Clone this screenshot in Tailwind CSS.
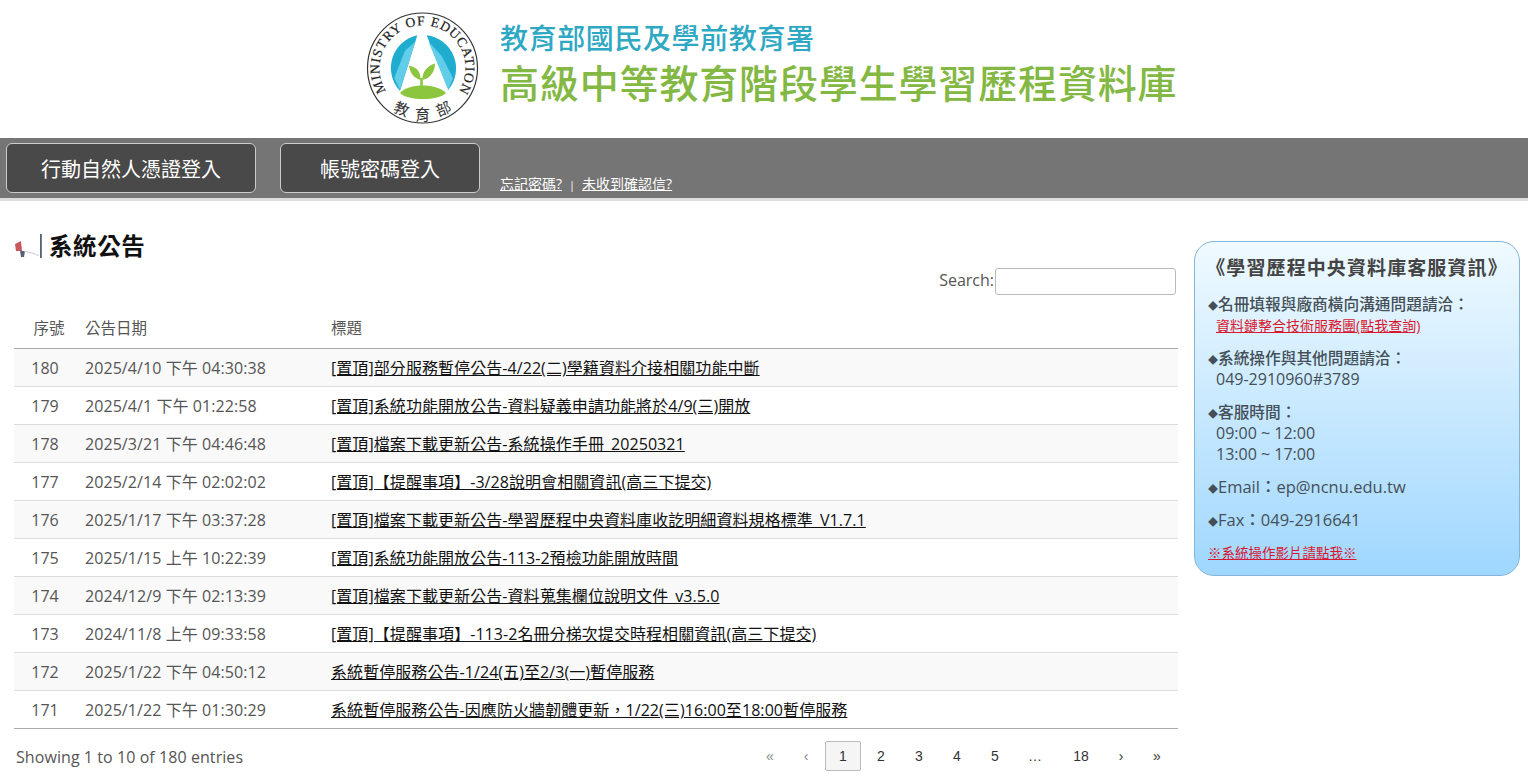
<!DOCTYPE html>
<html lang="zh-Hant">
<head>
    <meta charset="UTF-8">
    <title>高級中等教育階段學生學習歷程資料庫</title>
    <script src="https://cdn.jsdelivr.net/npm/@tailwindcss/browser@4"></script>
</head>
<body class="bg-white text-[#555] h-[778px] overflow-hidden font-['Open_Sans','Noto_Sans_CJK_TC',sans-serif]">
    <!-- Logo -->
    <header class="h-[138px] pl-[366px] pt-[12px] flex items-start gap-[21px]">
        <svg class="w-[113px] h-[113px] shrink-0" viewBox="0 0 113 113">
            <circle cx="56.5" cy="56" r="55" fill="#fff" stroke="#333" stroke-width="1.2"/>
            <path d="M51.3 23.3 A33.5 33.5 0 0 0 34 79 Z" fill="#1fadcf"/>
            <path d="M60.7 23.3 A33.5 33.5 0 0 1 82.3 78 Z" fill="#1fadcf"/>
            <path d="M49.7 29.3 L34 77.7 L28.3 66 L39 38.7 Z" fill="#62cde8"/>
            <path d="M62.3 29.3 L82.3 77.7 L87 66 L75.7 44 Z" fill="#62cde8"/>
            <path d="M34 81 C42 71 71 71 80 81 C72 89 42 89 34 81 Z" fill="#8cc63f"/>
            <path d="M55.5 76 L55.5 66" stroke="#8cc63f" stroke-width="2.6" fill="none"/>
            <path d="M54.5 68 C47 66 44 60 43 53.5 C50 55 55 59 54.5 68 Z M56.5 68 C56 60 61 54 69 51.5 C69 59 65 66 56.5 68 Z" fill="#8cc63f"/>
            <defs><path id="ring" d="M20 79 A43 43 0 1 1 93 79"/></defs>
            <text font-family="Liberation Serif" font-size="13.5" fill="#222" stroke="#222" stroke-width="0.2"><textPath href="#ring" textLength="183">MINISTRY OF EDUCATION</textPath></text>
            <g font-family="Noto Sans CJK TC" font-size="15" fill="#333" text-anchor="middle">
                <text transform="translate(33.5 102) rotate(22)">教</text>
                <text transform="translate(56.5 107.5)">育</text>
                <text transform="translate(79.5 102) rotate(-22)">部</text>
            </g>
        </svg>
        <div class="pt-[7px]">
            <div class="text-[#2fa8c4] text-[28px] leading-[38px] font-medium tracking-[0.6px]">教育部國民及學前教育署</div>
            <div class="text-[#84b844] text-[39px] leading-[52px] font-medium tracking-[0.85px]">高級中等教育階段學生學習歷程資料庫</div>
        </div>
    </header>

    <!-- 登入列 -->
    <nav class="h-[63px] bg-[#757575] border-b-[3px] border-[#ddd] pt-[5px] pl-[6px] flex items-start">
        <a class="w-[250px] h-[50px] pt-[3px] bg-[#494949] border border-[#ccc] rounded-[6px] text-white text-[20px] flex items-center justify-center">行動自然人憑證登入</a>
        <a class="w-[200px] h-[50px] pt-[3px] ml-[24px] bg-[#494949] border border-[#ccc] rounded-[6px] text-white text-[20px] flex items-center justify-center">帳號密碼登入</a>
        <div class="ml-[20px] mt-[31px] text-[14px] leading-[20px] text-white">
            <a class="underline">忘記密碼?</a><span class="mx-[7px] text-[11px]">|</span><a class="underline">未收到確認信?</a>
        </div>
    </nav>

    <main class="flex pl-[14px] pr-[8px] gap-[16px]">
        <section class="w-[1164px]">
            <h2 class="h-[67px] pt-[29px] pb-[6px] flex items-center text-[#111] text-[23.5px] leading-[30px] font-bold tracking-[0.6px]">
                <svg class="w-[28px] h-[26px] mr-[7px] shrink-0" viewBox="0 0 28 26">
                    <path d="M1 11 L7 8 L8 18 L2 18 Z" fill="#c9585c"/>
                    <path d="M6 18 L11 18 L10 24 L7 24 Z" fill="#56607a"/>
                    <path d="M10 18 C15 20 21 20 25 23" stroke="#ccc" stroke-width="1" fill="none"/>
                    <rect x="26" y="1" width="1.8" height="24" fill="#56607a"/>
                </svg>
                系統公告
            </h2>
            <div class="h-[43px] flex justify-end items-start text-[16px] pr-[2px]">
                <label class="leading-[25px] mr-[1px]">Search:</label>
                <input class="w-[181px] h-[27px] bg-white border border-[#bbb] rounded-[3px]">
            </div>
            <table class="w-full text-[16px] border-collapse table-fixed">
                <thead>
                    <tr class="h-[37px] border-b border-[#aaa]">
                        <th class="w-[61px] pb-[1px] font-normal text-center pl-[9px] text-[15.5px]">序號</th>
                        <th class="w-[256px] pb-[1px] pl-[10px] font-normal text-left text-[15.5px]">公告日期</th>
                        <th class="pb-[1px] font-normal text-left text-[15.5px]">標題</th>
                    </tr>
                </thead>
                <tbody class="tracking-[0.07px] [&>tr]:h-[38px] [&>tr]:border-b [&>tr]:border-[#ddd] [&>tr:nth-child(odd)]:bg-[#f9f9f9] [&_a]:text-[#111] [&_a]:underline [&_td]:pt-[2px] [&_td:first-child]:text-center [&_td:first-child]:pl-[1px] [&_td:nth-child(2)]:pl-[10px]">
                    <tr><td>180</td><td>2025/4/10 下午 04:30:38</td><td><a>[置頂]部分服務暫停公告-4/22(二)學籍資料介接相關功能中斷</a></td></tr>
                    <tr><td>179</td><td>2025/4/1 下午 01:22:58</td><td><a>[置頂]系統功能開放公告-資料疑義申請功能將於4/9(三)開放</a></td></tr>
                    <tr><td>178</td><td>2025/3/21 下午 04:46:48</td><td><a>[置頂]檔案下載更新公告-系統操作手冊_20250321</a></td></tr>
                    <tr><td>177</td><td>2025/2/14 下午 02:02:02</td><td><a>[置頂]【提醒事項】-3/28說明會相關資訊(高三下提交)</a></td></tr>
                    <tr><td>176</td><td>2025/1/17 下午 03:37:28</td><td><a>[置頂]檔案下載更新公告-學習歷程中央資料庫收訖明細資料規格標準_V1.7.1</a></td></tr>
                    <tr><td>175</td><td>2025/1/15 上午 10:22:39</td><td><a>[置頂]系統功能開放公告-113-2預檢功能開放時間</a></td></tr>
                    <tr><td>174</td><td>2024/12/9 下午 02:13:39</td><td><a>[置頂]檔案下載更新公告-資料蒐集欄位說明文件_v3.5.0</a></td></tr>
                    <tr><td>173</td><td>2024/11/8 上午 09:33:58</td><td><a>[置頂]【提醒事項】-113-2名冊分梯次提交時程相關資訊(高三下提交)</a></td></tr>
                    <tr><td>172</td><td>2025/1/22 下午 04:50:12</td><td><a>系統暫停服務公告-1/24(五)至2/3(一)暫停服務</a></td></tr>
                    <tr class="!border-[#aaa]"><td>171</td><td>2025/1/22 下午 01:30:29</td><td><a>系統暫停服務公告-因應防火牆韌體更新，1/22(三)16:00至18:00暫停服務</a></td></tr>
                </tbody>
            </table>
            <div class="flex justify-between items-start pt-[12px] pl-[2px]">
                <div class="text-[16px] leading-[32px] tracking-[0.07px]">Showing 1 to 10 of 180 entries</div>
                <div class="flex text-[14px] leading-[30px] h-[30px] font-['Liberation_Sans',sans-serif] text-[#333]">
                    <span class="w-[36px] text-center text-[#888]">«</span>
                    <span class="w-[36px] text-center text-[#888]">‹</span>
                    <span class="w-[36px] mx-[1px] leading-[28px] text-center bg-[#f5f5f5] border border-[#bbb] rounded-[2px]">1</span>
                    <span class="w-[38px] text-center">2</span>
                    <span class="w-[38px] text-center">3</span>
                    <span class="w-[38px] text-center">4</span>
                    <span class="w-[38px] text-center">5</span>
                    <span class="w-[42px] text-center">…</span>
                    <span class="w-[50px] text-center">18</span>
                    <span class="w-[30px] text-center">›</span>
                    <span class="w-[42px] text-center">»</span>
                </div>
            </div>
        </section>

        <!-- 客服資訊 -->
        <aside class="w-[326px] h-[335px] mt-[40px] rounded-[20px] border border-[#84b5d8] bg-gradient-to-b from-[#f0faff] to-[#9fd7ff] pl-[13px] text-[#444f58] [&>div]:h-[21px] [&>div]:leading-[21px] [&>div]:whitespace-nowrap [&>a]:h-[21px] [&>a]:leading-[21px]">
            <div class="!h-[28px] !leading-[28px] mt-[12px] -ml-[13px] text-[19px] font-semibold text-center text-[#444] tracking-[1.1px]">《學習歷程中央資料庫客服資訊》</div>
            <div class="mt-[12px] text-[15.7px] font-medium"><span class="text-[10px]">◆</span>名冊填報與廠商橫向溝通問題請洽：</div>
            <a class="block pl-[8px] text-[14px] text-[#d81830] underline">資料鏈整合技術服務團(點我查詢)</a>
            <div class="mt-[12px] text-[15.7px] font-medium"><span class="text-[10px]">◆</span>系統操作與其他問題請洽：</div>
            <div class="pl-[8px] text-[16px]">049-2910960#3789</div>
            <div class="mt-[12px] text-[15.7px] font-medium"><span class="text-[10px]">◆</span>客服時間：</div>
            <div class="pl-[8px] text-[16px]">09:00 ~ 12:00</div>
            <div class="pl-[8px] text-[16px]">13:00 ~ 17:00</div>
            <div class="mt-[11px] text-[16.5px] font-medium"><span class="text-[10px]">◆</span>Email：ep@ncnu.edu.tw</div>
            <div class="mt-[12px] text-[16.5px] font-medium"><span class="text-[10px]">◆</span>Fax：049-2916641</div>
            <a class="block mt-[13px] text-[13.5px] text-[#d81830] underline">※系統操作影片請點我※</a>
        </aside>
    </main>
</body>
</html>
